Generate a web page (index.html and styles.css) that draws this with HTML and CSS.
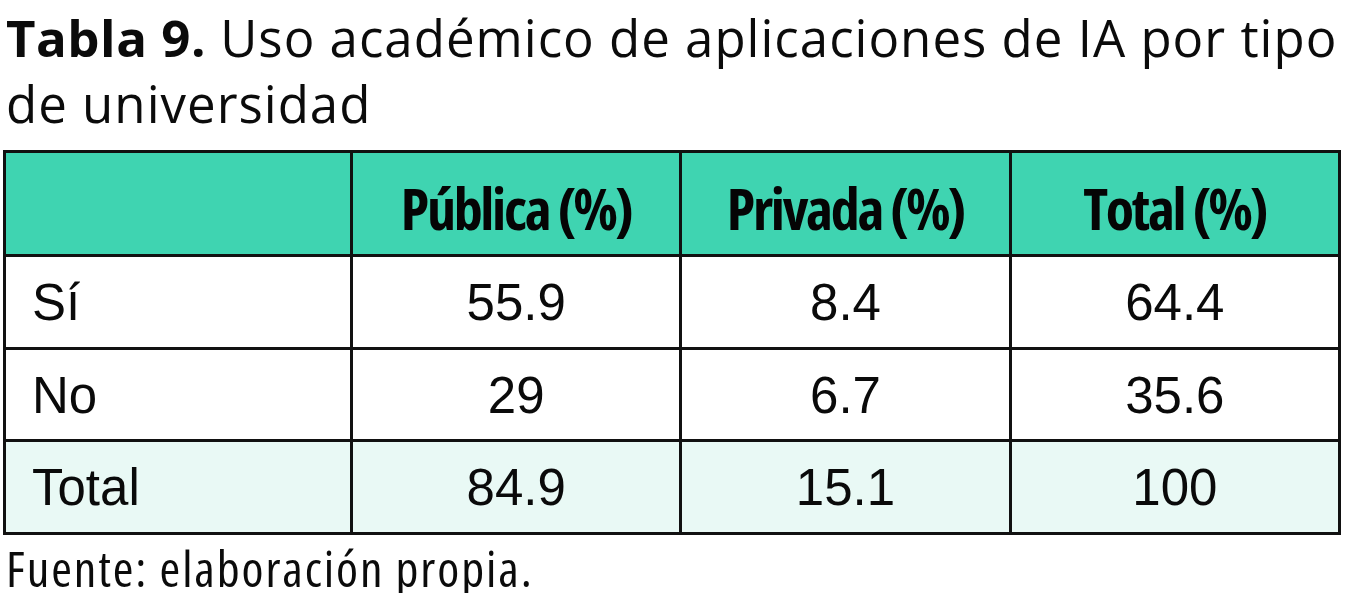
FILE: index.html
```html
<!DOCTYPE html>
<html lang="es">
<head>
<meta charset="utf-8">
<title>Tabla 9</title>
<link rel="stylesheet" href="styles.css">
</head>
<body>
<main class="page">
  <h1 class="title"><strong>Tabla 9.</strong> Uso académico de aplicaciones de IA por tipo de universidad</h1>
  <table class="data">
    <thead>
      <tr>
        <th class="blank"></th>
        <th>Pública (%)</th>
        <th>Privada (%)</th>
        <th>Total (%)</th>
      </tr>
    </thead>
    <tbody>
      <tr>
        <td class="label">Sí</td>
        <td>55.9</td>
        <td>8.4</td>
        <td>64.4</td>
      </tr>
      <tr>
        <td class="label">No</td>
        <td>29</td>
        <td>6.7</td>
        <td>35.6</td>
      </tr>
      <tr class="total">
        <td class="label">Total</td>
        <td>84.9</td>
        <td>15.1</td>
        <td>100</td>
      </tr>
    </tbody>
  </table>
  <p class="source">Fuente: elaboración propia.</p>
</main>
</body>
</html>
```

FILE: styles.css
```css
html, body {
  margin: 0;
  padding: 0;
  background: #ffffff;
}

.page {
  padding: 4px 4px 0 3px;
  color: #0b0b0b;
}

.title {
  margin: 0 0 14px 3px;
  font-family: "Open Sans", "Noto Sans", sans-serif;
  font-weight: 400;
  font-size: 51px;
  letter-spacing: 1px;
  line-height: 66px;
}

.title strong {
  font-weight: 700;
  letter-spacing: 0.5px;
}

.data {
  width: 1338px;
  border-collapse: collapse;
  table-layout: fixed;
}

.data th,
.data td {
  border: 3px solid #111111;
  text-align: center;
}

.data th {
  background: #3fd4b1;
  height: 104px;
  padding: 8px 0 0 0;
  box-sizing: border-box;
  font-family: "Open Sans", "Liberation Sans Narrow", sans-serif;
  font-stretch: 75%;
  font-weight: 700;
  font-size: 58px;
  letter-spacing: -2.3px;
  line-height: 1;
  color: #050505;
}

.data th.blank {
  width: 347px;
}

.data td {
  height: 92.5px;
  padding: 2px 0 0 0;
  box-sizing: border-box;
  font-family: "Liberation Sans", Arial, sans-serif;
  font-size: 51px;
  line-height: 1;
  color: #0a0a0a;
}

.data td.label {
  text-align: left;
  padding-left: 26px;
}

.data tr.total td {
  background: #e9f9f5;
}

.source {
  margin: 8px 0 0 3px;
  font-family: "Open Sans", "Liberation Sans Narrow", sans-serif;
  font-stretch: 75%;
  font-weight: 400;
  font-size: 50px;
  letter-spacing: 1.9px;
  line-height: 50px;
  color: #0b0b0b;
}
```
